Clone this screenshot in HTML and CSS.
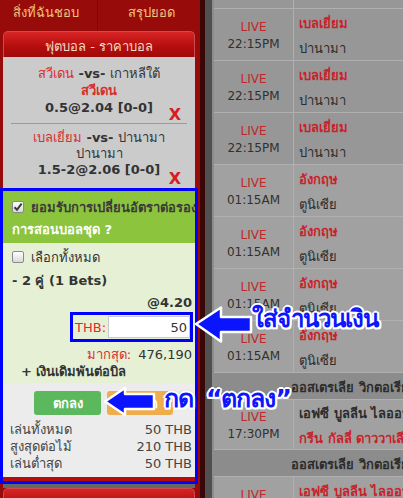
FILE: index.html
```html
<!DOCTYPE html>
<html lang="th">
<head>
<meta charset="utf-8">
<link rel="stylesheet" href="styles.css">
</head>
<body>
<div class="page">
  <aside class="sidebar">
    <nav class="tabs">
      <div class="tab tab-first">สิ่งที่ฉันชอบ</div>
      <div class="tab tab-last">สรุปยอด</div>
    </nav>
    <section class="card">
      <header class="card-head">ฟุตบอล - ราคาบอล</header>
      <div class="bets">
        <div class="bet">
          <div><span class="red">สวีเดน</span> <b>-vs-</b> เกาหลีใต้</div>
          <div class="red b">สวีเดน</div>
          <div class="b">0.5@2.04 [0-0]</div>
          <span class="x">X</span>
        </div>
        <div class="bet">
          <div><span class="red">เบลเยี่ยม</span> <b>-vs-</b> ปานามา</div>
          <div>ปานามา</div>
          <div class="b">1.5-2@2.06 [0-0]</div>
          <span class="x">X</span>
        </div>
      </div>
      <div class="focus">
        <div class="accept">
          <div class="line"><span class="cb"><svg viewBox="0 0 12 12" width="12" height="12"><path d="M2.5 6.2 L5 8.8 L9.6 2.6" fill="none" stroke="#3a3a3a" stroke-width="2"/></svg></span><span class="accept-text">ยอมรับการเปลี่ยนอัตราต่อรอง</span></div>
          <div class="line parlay">การสอนบอลชุด ?</div>
        </div>
        <div class="slip">
          <div class="line"><span class="cb"></span><span>เลือกทั้งหมด</span></div>
          <div class="line b pairs">- 2 คู่ (1 Bets)</div>
          <div class="line b right odds">@4.20</div>
          <div class="stake"><span class="stake-label">THB:</span><input class="stake-input" type="text" value="50"></div>
          <div class="line right max"><span class="red">มากสุด:</span> 476,190</div>
          <div class="line b add">+ เงินเดิมพันต่อบิล</div>
        </div>
        <div class="foot">
          <div class="buttons">
            <span class="btn btn-ok">ตกลง</span>
            <span class="btn btn-cancel">ยกเลิก</span>
          </div>
          <div class="sum"><span>เล่นทั้งหมด</span><span>50 THB</span></div>
          <div class="sum"><span>สูงสุดต่อไม้</span><span>210 THB</span></div>
          <div class="sum"><span>เล่นต่ำสุด</span><span>50 THB</span></div>
        </div>
      </div>
    </section>
    <section class="card next">
      <header class="card-head">ผลการแข่งขัน</header>
    </section>
  </aside>
  <div class="gutter"></div>
  <main class="board">
    <div class="row stub"><div class="when"></div><div class="teams"></div></div>
    <div class="row dark"><div class="when"><span class="live">LIVE</span><span>22:15PM</span></div><div class="teams"><span class="home">เบลเยี่ยม</span><span>ปานามา</span></div></div>
    <div class="row dark"><div class="when"><span class="live">LIVE</span><span>22:15PM</span></div><div class="teams"><span class="home">เบลเยี่ยม</span><span>ปานามา</span></div></div>
    <div class="row dark"><div class="when"><span class="live">LIVE</span><span>22:15PM</span></div><div class="teams"><span class="home">เบลเยี่ยม</span><span>ปานามา</span></div></div>
    <div class="row"><div class="when"><span class="live">LIVE</span><span>01:15AM</span></div><div class="teams"><span class="home">อังกฤษ</span><span>ตูนิเซีย</span></div></div>
    <div class="row"><div class="when"><span class="live">LIVE</span><span>01:15AM</span></div><div class="teams"><span class="home">อังกฤษ</span><span>ตูนิเซีย</span></div></div>
    <div class="row"><div class="when"><span class="live">LIVE</span><span>01:15AM</span></div><div class="teams"><span class="home">อังกฤษ</span><span>ตูนิเซีย</span></div></div>
    <div class="row"><div class="when"><span class="live">LIVE</span><span>01:15AM</span></div><div class="teams"><span class="home">อังกฤษ</span><span>ตูนิเซีย</span></div></div>
    <div class="league">ออสเตรเลีย วิกตอเรีย พรีเมียร์ลีก</div>
    <div class="row short"><div class="when"><span class="live">LIVE</span><span>17:30PM</span></div><div class="teams"><span class="fav">เอฟซี บูลลีน ไลออนส์</span><span class="home">กรีน กัลลี่ ดาววาเลีย</span></div></div>
    <div class="league">ออสเตรเลีย วิกตอเรีย พรีเมียร์ลีก</div>
    <div class="row"><div class="when"><span class="live">LIVE</span><span>17:30PM</span></div><div class="teams"><span class="home">เอฟซี บูลลีน ไลออนส์</span><span>กรีน กัลลี่ ดาววาเลีย</span></div></div>
  </main>

  <svg class="arrow arrow-amount" width="62" height="40" viewBox="0 0 62 40"><path d="M3 19 L28 2.5 L28 12 L58 12 L58 27 L28 27 L28 36.5 Z" fill="#0a14ff" stroke="#ffffff" stroke-width="2.5" stroke-linejoin="round"/></svg>
  <div class="note note-amount">ใส่จำนวนเงิน</div>
  <svg class="arrow arrow-ok" width="56" height="32" viewBox="0 0 56 32"><path d="M3 15.5 L23 2 L23 8 L52 8 L52 23 L23 23 L23 29 Z" fill="#0a14ff" stroke="#ffffff" stroke-width="2.5" stroke-linejoin="round"/></svg>
  <div class="note note-press">กด</div>
  <div class="note note-ok">“ตกลง”</div>
</div>
</body>
</html>
```

FILE: styles.css
```css
* { box-sizing: border-box; margin: 0; padding: 0; }
html, body { width: 403px; height: 498px; overflow: hidden; }
body {
  font-family: Tahoma, "DejaVu Sans", "Noto Sans", sans-serif;
  font-size: 13px;
  color: #333;
  background: #555;
}
.page { position: relative; display: flex; height: 498px; overflow: hidden; }

/* sidebar */
.sidebar {
  width: 205px; flex: none;
  background: #970b0b;
  border-right: 5px solid #3a0707;
  display: flex; flex-direction: column;
}
.tabs { display: flex; height: 31px; flex: none; color: #f1c27c; font-size: 13px; }
.tab { display: flex; align-items: center; padding-bottom: 6px; }
.tab-first { width: 98px; padding-left: 13px; border-right: 1px solid #7e0909; }
.tab-last { flex: 1; justify-content: flex-end; padding-right: 25px; }

.card { margin: 0 5px 0 3px; flex: none; }
.card-head {
  height: 26px; padding-top: 3px;
  border: 1px solid #cf4a4a; border-bottom: 0;
  border-radius: 5px 5px 0 0;
  background: linear-gradient(#d82424, #b30d0d 60%, #a00a0a);
  color: #f3dcc4;
  display: flex; align-items: center; justify-content: center;
}
.bets { background: #cbcbcb; padding: 0 8px; }
.bet {
  position: relative;
  text-align: center; line-height: 17px;
  padding: 8px 0 7px;
}
.bet + .bet { border-top: 1px solid #9a9a9a; padding: 6px 0 10px; line-height: 16px; }
.red { color: #d7302c; }
.b { font-weight: bold; }
.x {
  position: absolute; right: 6px; bottom: 0;
  color: #d91d1d; font-weight: bold; font-size: 16px; line-height: 16px;
  font-family: "DejaVu Sans", sans-serif;
}
.bet + .bet .x { bottom: 1px; }

/* focused bet slip */
.focus { margin: 0 -3px; border: 3px solid #0000fe; }
.line { display: flex; align-items: center; gap: 7px; height: 20px; white-space: nowrap; overflow: hidden; }
.right { justify-content: flex-end; }
.cb {
  width: 12px; height: 12px; flex: none;
  border: 1px solid #8a8a8a; border-radius: 2px;
  background: linear-gradient(#ffffff, #d9d9d9);
  display: flex;
}
.cb svg { margin: -1px; }
.accept { background: #8cc43e; padding: 6px 0 4px 9px; }
.accept-text { font-weight: bold; color: #3a3a3a; }
.parlay { margin-top: 2px; color: #fff; font-weight: bold; }
.slip {
  background: #e5f0d5;
  padding: 4px 3px 3px 9px;
  display: flex; flex-direction: column;
}
.pairs { margin-top: 3px; }
.odds { margin-top: 3px; height: 19px; }
.stake {
  align-self: flex-end;
  width: 123px; height: 30px; flex: none;
  border: 3px solid #0000fe;
  display: flex; align-items: center;
  margin-right: -1px;
}
.stake-label { color: #e8262b; padding: 0 2px; }
.stake-input {
  flex: 1; min-width: 0; height: 22px;
  border: 1px solid #c9c9c9; background: #fff;
  font: inherit; color: #333; text-align: right;
  padding-right: 2px; outline: none;
}
.max { height: 18px; margin-top: 3px; }
.add { padding-left: 9px; height: 18px; margin-top: -1px; }

.foot { background: #ececec; padding: 8px 3px 5px 7px; border-bottom: 4px solid #b60c0c; }
.buttons { display: flex; gap: 6px; padding-left: 24px; margin-bottom: 6px; }
.btn {
  width: 67px; height: 24px; border-radius: 3px;
  display: flex; align-items: center; justify-content: center;
  color: #fff; font-weight: bold;
}
.btn-ok { background: #5cb85c; }
.btn-cancel { background: #f0ad4e; width: 66px; }
.sum { display: flex; justify-content: space-between; line-height: 17px; color: #444; }

.next { margin-top: 4px; box-shadow: 0 -4px 0 #676767; }
.next .card-head { align-items: flex-start; padding-top: 8px; color: #fff; }

/* right board */
.gutter { width: 7px; flex: none; background: #505050; }
.board { flex: 1; min-width: 0; border-left: 2px solid #8d8d8d; background: #9c9c9c; overflow: hidden; }
.row {
  display: grid; grid-template-columns: 80px 1fr;
  height: 52px; border-bottom: 1px solid #b0b0b0;
  background: #a1a1a1;
}
.row.dark { background: #979797; }
.row.stub { height: 9px; background: #979797; }
.row.short { height: 50px; }
.when {
  border-right: 1px solid #b0b0b0;
  display: flex; flex-direction: column; align-items: center; justify-content: center;
  padding-top: 3px;
  font-size: 12px; line-height: 17px; color: #303030;
}
.live { color: #c2262a; }
.teams {
  display: flex; flex-direction: column; justify-content: center; gap: 4px;
  padding: 3px 0 0 5px; line-height: 21px; white-space: nowrap; color: #2c2c2c;
}
.stub .when, .stub .teams { padding: 0; }
.home { color: #c8232a; font-weight: bold; }
.fav { color: #2c2c2c; font-weight: bold; }
.league {
  height: 27px; background: #8c8c8c; border-bottom: 1px solid #b0b0b0;
  display: flex; align-items: center; padding: 2px 0 0 77px;
  white-space: nowrap; color: #2c2c2c; font-weight: bold;
}

/* annotations */
.arrow { position: absolute; }
.arrow-amount { left: 193px; top: 305px; }
.arrow-ok { left: 102px; top: 386px; }
.note {
  position: absolute;
  color: #0c16ff; font-weight: bold; white-space: nowrap;
  line-height: 1; letter-spacing: -1px;
  text-shadow:
    2px 0 0 #fff, -2px 0 0 #fff, 0 2px 0 #fff, 0 -2px 0 #fff,
    1.5px 1.5px 0 #fff, -1.5px 1.5px 0 #fff, 1.5px -1.5px 0 #fff, -1.5px -1.5px 0 #fff,
    0 0 3px #333;
}
.note-amount { left: 252px; top: 307px; font-size: 24px; }
.note-press { left: 164px; top: 386px; font-size: 25px; }
.note-ok { left: 206px; top: 386px; font-size: 25px; }
```
